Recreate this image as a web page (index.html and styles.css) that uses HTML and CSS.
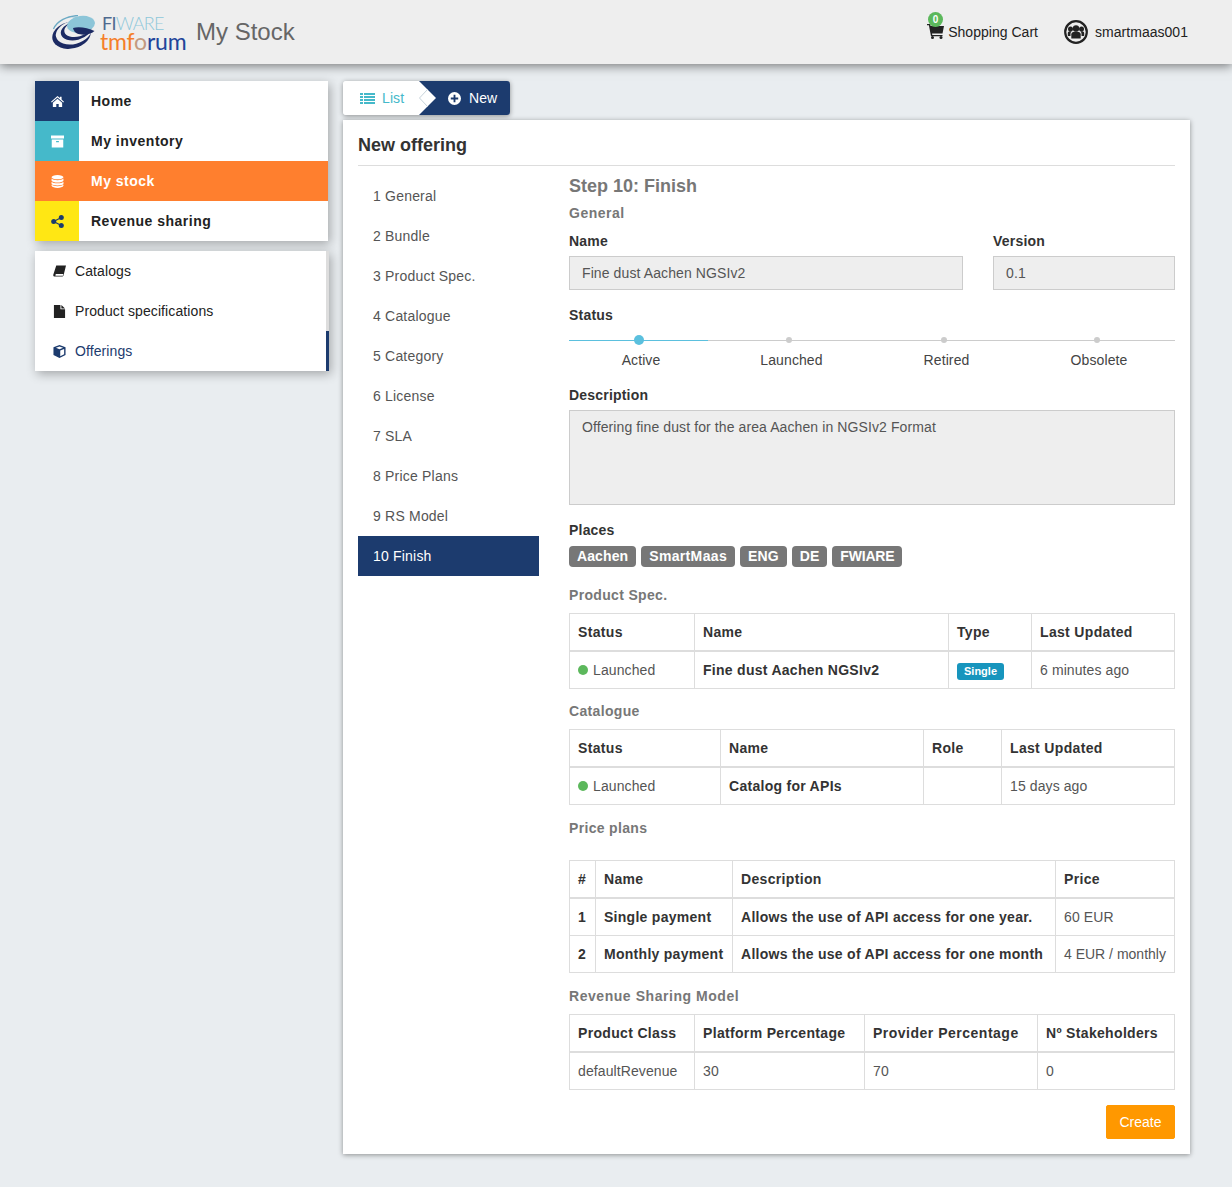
FILE: index.html
```html
<!DOCTYPE html>
<html lang="en">
<head>
<meta charset="utf-8">
<title>My Stock</title>
<link rel="stylesheet" href="styles.css">
</head>
<body>
<header class="topbar">
  <div class="brand">
    <svg class="swirl" viewBox="0 0 43 34" aria-hidden="true">
      <ellipse cx="19.500" cy="20" rx="19.500" ry="13.500" transform="rotate(-14 19.500 20)" fill="#1c2a63"/>
      <ellipse cx="21.500" cy="17.500" rx="18" ry="11.500" transform="rotate(-14 21.500 17.500)" fill="#eee"/>
      <path d="M1.500 14C5 6 15 1 26 .5" fill="none" stroke="#6aa9c4" stroke-width="1.300"/>
      <ellipse cx="24" cy="15.500" rx="15.500" ry="9.500" transform="rotate(-14 24 15.500)" fill="#1c2a63"/>
      <ellipse cx="26" cy="13.500" rx="14" ry="8" transform="rotate(-14 26 13.500)" fill="#eee"/>
      <ellipse cx="29" cy="9.500" rx="14" ry="8.500" transform="rotate(-8 29 9.500)" fill="#8cc5d8"/>
      <path d="M21 13C27 11 36 13 42.500 16C38 20 30 20.500 25 18.500C23 17.500 21.500 15.500 21 13Z" fill="#1c2a63"/>
    </svg>
    <div class="wordmark">
      <div class="fiware"><span class="fi">FI</span>WARE</div>
      <div class="tmforum"><span class="tm">tmf</span><span class="globe">o</span><span class="orum">rum</span></div>
    </div>
    <span class="page-title">My Stock</span>
  </div>
  <nav class="account">
    <a class="cart">
      <span class="cart-icon">
        <span class="badge">0</span>
        <svg class="ico-cart" viewBox="0 0 17 15" aria-hidden="true"><path d="M0 0h3l.7 2H17l-1.500 7.500H5l.3 1.500h10.200v1.300H4L1.900 1.300H0z" fill="#222"/><circle cx="5.500" cy="13.500" r="1.500" fill="#222"/><circle cx="14" cy="13.500" r="1.500" fill="#222"/></svg>
      </span>
      Shopping Cart
    </a>
    <a class="user">
      <svg class="ico-user" viewBox="0 0 24 24" aria-hidden="true"><circle cx="12" cy="12" r="10.800" fill="none" stroke="#222" stroke-width="2.200"/><circle cx="12" cy="8.500" r="3.200" fill="#222"/><circle cx="6.500" cy="9" r="2.500" fill="#222"/><circle cx="17.500" cy="9" r="2.500" fill="#222"/><path d="M7.300 18.500v-4.300c0-1.800 1.800-2.700 4.700-2.700s4.700.9 4.700 2.700v4.300z" fill="#222"/><path d="M3.800 16v-2.800c0-1.300 1-1.900 2.900-1.900l.9.300c-.8.600-1.100 1.500-1.100 2.400V16zM20.200 16v-2.800c0-1.300-1-1.900-2.900-1.900l-.9.300c.8.600 1.100 1.500 1.100 2.400V16z" fill="#222"/></svg>
      smartmaas001
    </a>
  </nav>
</header>

<div class="layout">
  <aside class="sidebar">
    <ul class="mainmenu">
      <li class="mm-item"><span class="mm-icon ic-home"><svg viewBox="0 0 14 12" class="i13"><path d="M7 0l2.600 2.300V1h1.800v2.900L14 6.200l-.8.8L7 1.600.8 7 0 6.200zM2 7.400L7 3l5 4.400V12H8.300V8.600H5.700V12H2z" fill="#fff"/></svg></span><span class="mm-label">Home</span></li>
      <li class="mm-item"><span class="mm-icon ic-inv"><svg viewBox="0 0 14 13" class="i13"><path d="M0 0h14v3.400H0zM.8 4.400h12.400V13H.8zM5.500 6v1.200h3V6z" fill="#fff" fill-rule="evenodd"/></svg></span><span class="mm-label">My inventory</span></li>
      <li class="mm-item active"><span class="mm-icon"><svg viewBox="0 0 14 14" class="i13"><ellipse cx="7" cy="2.300" rx="6.400" ry="2.300" fill="#fff"/><path d="M.6 3.900c1.200 1.200 3.600 1.700 6.400 1.700s5.200-.5 6.400-1.700v2.400c-.7 1.100-3.300 1.900-6.400 1.900S1.300 7.400.6 6.300zM.6 7.300C1.800 8.500 4.200 9 7 9s5.200-.5 6.400-1.700v2.400C12.700 10.800 10.100 11.200 7 11.200S1.300 10.800.6 9.700zM.6 10.500c1.200 1 3.600 1.500 6.400 1.500s5.200-.5 6.400-1.500v1.200C12.700 13.100 10.100 14 7 14S1.300 13.100.6 11.700z" fill="#fff"/></svg></span><span class="mm-label">My stock</span></li>
      <li class="mm-item"><span class="mm-icon ic-rev"><svg viewBox="0 0 13 13" class="i13"><circle cx="2.700" cy="6.500" r="2.500" fill="#1c3b6e"/><circle cx="10.300" cy="2.500" r="2.500" fill="#1c3b6e"/><circle cx="10.300" cy="10.500" r="2.500" fill="#1c3b6e"/><path d="M2.700 6.500l7.600-4M2.700 6.500l7.600 4" stroke="#1c3b6e" stroke-width="1.200"/></svg></span><span class="mm-label">Revenue sharing</span></li>
    </ul>
    <ul class="submenu">
      <li class="sm-item"><svg viewBox="0 0 14 13" class="i13 sm-icon"><path d="M3.500 0H14l-2.600 10.600c-.2.900-1 1.400-1.900 1.400H1.800C.7 12 0 11.200.3 10zM2.600 10.200c-.2.500 0 .8.500.8h7.500l.5-1.800H3.100z" fill="#222" fill-rule="evenodd"/></svg>Catalogs</li>
      <li class="sm-item"><svg viewBox="0 0 12 14" class="i13 sm-icon"><path d="M0 0h7v4.600h5V14H0zM8 0l4 3.700H8z" fill="#222"/></svg>Product specifications</li>
      <li class="sm-item current"><svg viewBox="0 0 14 14" class="i13 sm-icon"><path d="M7 0l6.500 2.500v8.400L7 14 .5 10.900V2.500zM3.100 3L7 4.500 10.900 3 7 1.500zM7.800 6v6l4.200-2V4.400z" fill="#1c3b6e" fill-rule="evenodd"/></svg>Offerings</li>
    </ul>
  </aside>

  <main class="content">
    <div class="tabs">
      <a class="tab tab-list"><svg viewBox="0 0 15 11" class="ico-list"><path d="M0 0h3v2H0zM4 0h11v2H4zM0 3h3v2H0zM4 3h11v2H4zM0 6h3v2H0zM4 6h11v2H4zM0 9h3v2H0zM4 9h11v2H4z" fill="#45b9ca"/></svg>List</a>
      <a class="tab tab-new">
        <svg class="chevron" viewBox="0 0 18 34" aria-hidden="true"><path d="M0 0L17 17 0 34z" fill="#fff"/><path d="M8.500 8.500L.5 17l8 8.500" fill="none" stroke="#c6d2da"/></svg>
        <svg viewBox="0 0 14 14" class="ico-plus"><path d="M7 0a7 7 0 1 0 0 14A7 7 0 0 0 7 0zM6 3h2v3h3v2H8v3H6V8H3V6h3z" fill="#fff" fill-rule="evenodd"/></svg>New
      </a>
    </div>

    <section class="panel">
      <h2 class="panel-title">New offering</h2>
      <div class="wizard">
        <ol class="steps">
          <li>1 General</li><li>2 Bundle</li><li>3 Product Spec.</li><li>4 Catalogue</li><li>5 Category</li>
          <li>6 License</li><li>7 SLA</li><li>8 Price Plans</li><li>9 RS Model</li><li class="on">10 Finish</li>
        </ol>
        <div class="finish">
          <h3 class="step-title">Step 10: Finish</h3>
          <h4 class="sec sec-general">General</h4>
          <div class="field-row">
            <div class="field name-field"><label class="lbl">Name</label><div class="ctl">Fine dust Aachen NGSIv2</div></div>
            <div class="field ver-field"><label class="lbl">Version</label><div class="ctl">0.1</div></div>
          </div>
          <label class="lbl status-lbl">Status</label>
          <div class="status">
            <div class="st"><span class="track on"><i class="dot big"></i></span><span class="st-name">Active</span></div>
            <div class="st"><span class="track"><i class="dot"></i></span><span class="st-name">Launched</span></div>
            <div class="st"><span class="track"><i class="dot"></i></span><span class="st-name">Retired</span></div>
            <div class="st"><span class="track"><i class="dot"></i></span><span class="st-name">Obsolete</span></div>
          </div>
          <label class="lbl desc-lbl">Description</label>
          <div class="ctl area">Offering fine dust for the area Aachen in NGSIv2 Format</div>
          <label class="lbl places-lbl">Places</label>
          <div class="tags"><span class="tag">Aachen</span><span class="tag tag-wide">SmartMaas</span><span class="tag">ENG</span><span class="tag">DE</span><span class="tag tag-tight">FWIARE</span></div>

          <h4 class="sec sec-spec">Product Spec.</h4>
          <table class="tbl">
            <colgroup><col class="w125"><col class="w254"><col class="w83"><col class="w143"></colgroup>
            <thead><tr><th>Status</th><th>Name</th><th>Type</th><th>Last Updated</th></tr></thead>
            <tbody><tr><td><i class="ok"></i>Launched</td><td class="b">Fine dust Aachen NGSIv2</td><td class="type-cell"><span class="single">Single</span></td><td>6 minutes ago</td></tr></tbody>
          </table>

          <h4 class="sec sec-cat">Catalogue</h4>
          <table class="tbl">
            <colgroup><col class="w151"><col class="w203"><col class="w78"><col class="w173"></colgroup>
            <thead><tr><th>Status</th><th>Name</th><th>Role</th><th>Last Updated</th></tr></thead>
            <tbody><tr><td><i class="ok"></i>Launched</td><td class="b">Catalog for APIs</td><td></td><td>15 days ago</td></tr></tbody>
          </table>

          <h4 class="sec sec-price">Price plans</h4>
          <table class="tbl">
            <colgroup><col class="w26"><col class="w137"><col class="w323"><col class="w119"></colgroup>
            <thead><tr><th>#</th><th>Name</th><th>Description</th><th>Price</th></tr></thead>
            <tbody>
              <tr><td class="b">1</td><td class="b">Single payment</td><td class="b">Allows the use of API access for one year.</td><td>60 EUR</td></tr>
              <tr><td class="b">2</td><td class="b">Monthly payment</td><td class="b">Allows the use of API access for one month</td><td class="nw">4 EUR / monthly</td></tr>
            </tbody>
          </table>

          <h4 class="sec sec-rev">Revenue Sharing Model</h4>
          <table class="tbl">
            <colgroup><col class="w125"><col class="w170"><col class="w173"><col class="w137"></colgroup>
            <thead><tr><th>Product Class</th><th>Platform Percentage</th><th class="wide-th">Provider Percentage</th><th>Nº Stakeholders</th></tr></thead>
            <tbody><tr><td>defaultRevenue</td><td>30</td><td>70</td><td>0</td></tr></tbody>
          </table>

          <div class="actions"><button class="create" type="button">Create</button></div>
        </div>
      </div>
    </section>
  </main>
</div>
</body>
</html>
```

FILE: styles.css
```css
* { box-sizing: border-box; }
html, body { margin: 0; padding: 0; }
body {
  background: #e9edf0;
  font-family: "Liberation Sans", Arial, sans-serif;
  font-size: 14px;
  line-height: 20px;
  letter-spacing: .1px;
  color: #333;
  height: 1187px;
  overflow: hidden;
}
ul, ol { list-style: none; margin: 0; padding: 0; }
h2, h3, h4 { margin: 0; }
.i13 { width: 13px; height: 13px; display: block; }

.topbar {
  height: 64px;
  background: #eee;
  box-shadow: 0 2px 10px rgba(0, 0, 0, .5);
  display: flex;
  justify-content: space-between;
  padding: 0 44px 0 52px;
}
.brand { display: flex; align-items: center; }
.swirl { width: 43px; height: 34px; display: block; }
.wordmark { display: flex; flex-direction: column; margin-left: 5px; width: 96px; height: 36px; font-family: Lato, "Liberation Sans", sans-serif; letter-spacing: 0; }
.fiware { display: block; height: 18px; font-size: 18px; line-height: 18px; color: #8fc8da; letter-spacing: -.7px; padding-left: 2px; font-weight: 300; }
.fi { color: #4f6a8f; font-weight: 400; }
.tmforum { display: block; height: 18px; font-size: 23px; line-height: 18px; letter-spacing: -.2px; font-weight: 400; }
.tm { color: #f57f2a; }
.globe { color: #c49a80; }
.orum { color: #22449a; }
.page-title { font-size: 24px; line-height: 30px; color: #666; letter-spacing: 0; }

.account { display: flex; align-items: flex-start; padding-top: 22px; color: #222; letter-spacing: .03px; }
.cart { display: flex; align-items: center; height: 20px; margin-right: 26px; }
.cart-icon { position: relative; display: block; width: 17px; height: 15px; margin: -2px 4px 0 0; }
.ico-cart { width: 17px; height: 15px; display: block; }
.badge {
  position: absolute; left: 1px; top: -12px;
  width: 15px; height: 15px; border-radius: 50%;
  background: #5cb85c; color: #fff;
  font-size: 10px; line-height: 15px; font-weight: bold; text-align: center;
}
.user { display: flex; align-items: center; height: 20px; }
.ico-user { width: 24px; height: 24px; margin-right: 7px; display: block; flex: none; }

.layout { display: flex; padding: 17px 42px 0 35px; }
.sidebar { width: 293px; margin-right: 15px; flex: none; }
.mainmenu { background: #fff; box-shadow: 2px 3px 10px rgba(0, 0, 0, .3); }
.mm-item { display: flex; height: 40px; align-items: center; font-weight: bold; color: #222; letter-spacing: .5px; }
.mm-icon { width: 44px; height: 40px; display: flex; align-items: center; justify-content: center; margin-right: 12px; }
.ic-home { background: #1c3b6e; }
.ic-inv { background: #45b9ca; }
.ic-rev { background: #ffe714; }
.active { background: #ff7f2e; color: #fff; }
.submenu { margin-top: 10px; width: 294px; background: #fff; box-shadow: 2px 3px 10px rgba(0, 0, 0, .3); }
.sm-item { display: flex; align-items: center; height: 40px; padding-left: 18px; color: #222; border-right: 3px solid #ddd; }
.sm-icon { margin-right: 9px; }
.current { color: #1c3b6e; border-right-color: #1c3b6e; }

.content { width: 847px; flex: none; }
.tabs { display: flex; height: 34px; width: 167px; box-shadow: 0 1px 5px rgba(0, 0, 0, .4); border-radius: 3px; }
.tab { display: flex; align-items: center; height: 34px; }
.tab-list { width: 76px; background: #fff; color: #45b9ca; padding-left: 17px; border-radius: 3px 0 0 3px; }
.ico-list { width: 15px; height: 11px; margin-right: 7px; display: block; }
.tab-new { width: 91px; background: #1c3b6e; color: #fff; padding-left: 29px; border-radius: 0 3px 3px 0; position: relative; }
.chevron { position: absolute; left: 0; top: 0; width: 18px; height: 34px; }
.ico-plus { width: 13px; height: 13px; margin-right: 8px; display: block; }

.panel { margin-top: 5px; background: #fff; box-shadow: 0 1px 5px rgba(0, 0, 0, .4); padding: 15px; height: 1034px; }
.panel-title { font-size: 18px; line-height: 20px; color: #333; padding-bottom: 10px; border-bottom: 1px solid #ddd; letter-spacing: 0; }
.wizard { display: flex; margin-top: 10px; }
.steps { width: 181px; margin-right: 30px; flex: none; color: #555; letter-spacing: .2px; }
.steps li { height: 40px; line-height: 40px; padding-left: 15px; }
.steps .on { background: #1c3b6e; color: #fff; }
.finish { width: 606px; flex: none; }
.step-title { font-size: 18px; line-height: 20px; color: #777; letter-spacing: 0; }
.sec { font-size: 14px; line-height: 20px; color: #777; letter-spacing: .33px; }
.sec-general { margin-top: 7px; letter-spacing: .5px; }
.field-row { display: flex; justify-content: space-between; margin-top: 8px; }
.name-field { width: 394px; }
.ver-field { width: 182px; }
.lbl { display: block; font-weight: bold; line-height: 20px; letter-spacing: .2px; }
.ctl { margin-top: 5px; height: 34px; background: #eee; border: 1px solid #ccc; padding: 6px 12px; color: #555; }
.status-lbl { margin-top: 15px; }
.status { display: grid; grid-template-columns: 139px 162px 148px 157px; margin-top: 9px; }
.st { display: flex; flex-direction: column; align-items: center; color: #444; }
.track {
  width: 100%; height: 12px; display: flex; align-items: center; justify-content: center;
  background: linear-gradient(#ccc, #ccc) center / 100% 1px no-repeat;
}
.track.on { background-image: linear-gradient(#5bc0de, #5bc0de); }
.dot { width: 6px; height: 6px; border-radius: 50%; background: #ccc; display: block; }
.dot.big { width: 10px; height: 10px; background: #5bc0de; }
.st-name { line-height: 20px; padding-left: 5px; margin-top: 4px; }
.desc-lbl { margin-top: 15px; }
.area { height: 95px; }
.places-lbl { margin-top: 15px; }
.tags { display: flex; gap: 5px; margin-top: 6px; }
.tag { height: 21px; line-height: 21px; padding: 0 8px; background: #777; color: #fff; font-weight: bold; border-radius: 4px; letter-spacing: .1px; }
.tag-wide { letter-spacing: .35px; }
.tag-tight { letter-spacing: -.2px; }
.sec-spec { margin-top: 18px; }
.sec-cat { margin-top: 12px; }
.sec-price { margin-top: 13px; }
.sec-rev { margin-top: 13px; letter-spacing: .55px; }
.tbl { width: 605px; table-layout: fixed; border-collapse: collapse; margin-top: 8px; }
.sec-price + .tbl { margin-top: 22px; }
.tbl th, .tbl td { border: 1px solid #ddd; padding: 8px; text-align: left; line-height: 20px; vertical-align: middle; }
.tbl th { border-bottom-width: 2px; color: #333; letter-spacing: .33px; }
.tbl th.wide-th { letter-spacing: .5px; }
.tbl td { color: #555; }
.tbl td.b { font-weight: bold; color: #333; letter-spacing: .28px; white-space: nowrap; }
.nw { white-space: nowrap; letter-spacing: 0; }
.w26 { width: 26px; } .w78 { width: 78px; } .w83 { width: 83px; } .w119 { width: 119px; }
.w125 { width: 125px; } .w137 { width: 137px; } .w143 { width: 143px; }
.w151 { width: 151px; } .w170 { width: 170px; } .w173 { width: 173px; }
.w203 { width: 203px; } .w254 { width: 254px; } .w323 { width: 323px; }
.ok { display: inline-block; width: 10px; height: 10px; border-radius: 50%; background: #5cb85c; margin-right: 5px; }
.single { display: inline-block; height: 17px; line-height: 17px; padding: 0 7px; background: #1795bd; color: #fff; font-size: 11px; font-weight: bold; border-radius: 3px; letter-spacing: 0; }
.actions { display: flex; justify-content: flex-end; margin-top: 15px; }
.create { width: 69px; height: 34px; border: 1px solid #ff9800; background: #ff9800; color: #fff; font: 14px "Liberation Sans", Arial, sans-serif; border-radius: 2px; padding: 0; }
```
